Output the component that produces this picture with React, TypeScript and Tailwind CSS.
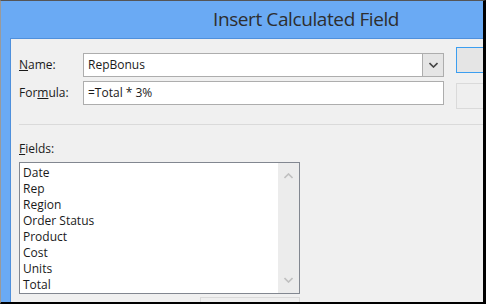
const fields = ['Date', 'Rep', 'Region', 'Order Status', 'Product', 'Cost', 'Units', 'Total'];

const Chevron = ({ up, className }: { up?: boolean; className?: string }) => (
    <svg width="9" height="6" viewBox="0 0 9 6" className={className}>
        <path
            d={up ? 'M0.5 5 L4.5 1 L8.5 5' : 'M0.5 1 L4.5 5 L8.5 1'}
            fill="none"
            stroke="currentColor"
            strokeWidth="1.6"
        />
    </svg>
);

export default function App() {
    return (
        <div
            className="w-[486px] h-[304px] overflow-hidden bg-[#6aaaf4] border-t border-l border-t-[#555] border-l-[#9a9a9a] border-r-[3px] border-b-2 border-r-black border-b-black flex flex-col text-[#1a1a1a]"
            style={{ fontFamily: '"Open Sans", "Noto Sans", Arial, sans-serif' }}
        >
            {/* Title bar */}
            <div className="h-[37px] shrink-0 flex items-center pl-[212px] pb-[1px] text-[19px] tracking-[-0.4px] text-[#2e2e2e] leading-none">
                Insert Calculated Field
            </div>

            {/* Body */}
            <div className="flex-1 ml-[9px] bg-[#f0f0f0] border-t border-l border-[#4f90dc] overflow-hidden text-[12px]">
                <div className="flex pt-[8px] pl-[8px] gap-[12px]">
                    <div className="w-[425px] shrink-0 pt-[6px] flex flex-col gap-[4px]">
                        <div className="flex items-center h-[24px]">
                            <span className="w-[64px]"><u>N</u>ame:</span>
                            <div className="flex-1 h-[24px] bg-white border border-[#adadad] flex items-center">
                                <span className="flex-1 pl-[4px]">RepBonus</span>
                                <div className="w-[21px] h-full bg-[#e5e5e5] border-l border-[#adadad] flex items-center justify-center text-[#444]">
                                    <Chevron />
                                </div>
                            </div>
                        </div>
                        <div className="flex items-center h-[24px]">
                            <span className="w-[64px]">For<u>m</u>ula:</span>
                            <div className="flex-1 h-[24px] bg-white border border-[#adadad] flex items-center pl-[4px]">
                                =Total * 3%
                            </div>
                        </div>
                    </div>
                    <div className="flex flex-col gap-[10px] shrink-0">
                        <div className="w-[75px] h-[26px] border border-[#3c9ef0] bg-[#e5e5e5]" />
                        <div className="w-[75px] h-[26px] border border-[#dadada] bg-[#efefef]" />
                    </div>
                </div>

                {/* Separator */}
                <div className="ml-[8px] mt-[15px] h-px bg-[#dadada]" />

                <div className="pl-[8px] mt-[16px] leading-[16px]">
                    <u>F</u>ields:
                </div>

                <div className="ml-[8px] mt-[5px] w-[281px] h-[132px] border border-[#828790] bg-white flex">
                    <div className="flex-1 pt-[2px] pl-[3px] leading-[16px]">
                        {fields.map((f) => (
                            <div key={f}>{f}</div>
                        ))}
                    </div>
                    <div className="w-[21px] bg-[#ececec] flex flex-col items-center justify-between py-[10px] text-[#c0c0c0]">
                        <Chevron up />
                        <Chevron />
                    </div>
                </div>

                <div className="ml-[189px] mt-[3px] w-[100px] h-[20px] border border-[#dadada] bg-[#efefef]" />
            </div>
        </div>
    );
}
